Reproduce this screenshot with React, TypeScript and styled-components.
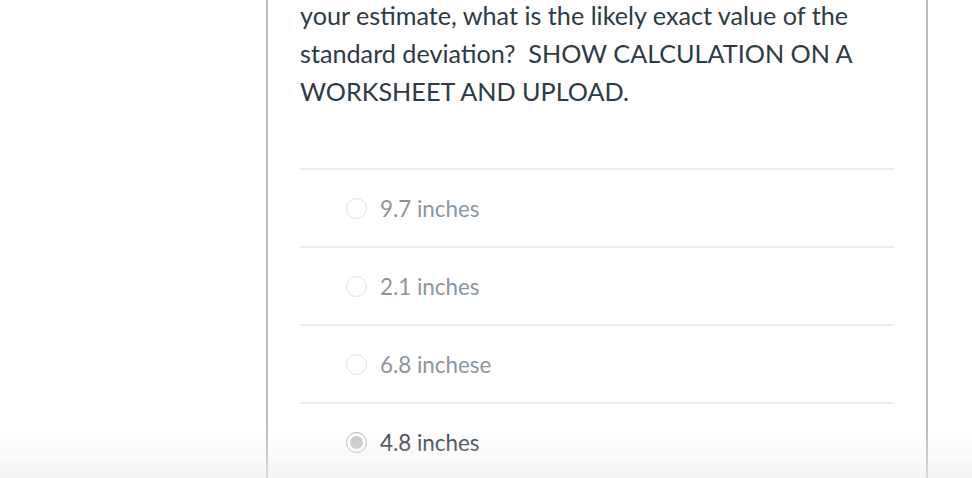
import styled, { createGlobalStyle } from "styled-components"

const GlobalStyle = createGlobalStyle`
  html, body {
    margin: 0;
    padding: 0;
    background: #ffffff;
    height: 100%;
    overflow: hidden;
  }
  body {
    font-family: Lato, "Open Sans", sans-serif;
  }
`

const Page = styled.div`
  display: flex;
  height: 478px;
  padding-left: 266px;
`

const Card = styled.div`
  width: 594px;
  border-left: 2px solid #bcbcbc;
  border-right: 2px solid #bcbcbc;
  padding: 0 32px;
  box-sizing: content-box;
`

const Question = styled.p`
  margin: -4px 0 0;
  font-size: 25.2px;
  line-height: 38px;
  color: #2d3b45;
  padding-bottom: 58px;
  border-bottom: 2px solid #ececec;
`

const Answers = styled.div`
  display: flex;
  flex-direction: column;
`

const Answer = styled.label<{ $last?: boolean }>`
  display: flex;
  align-items: center;
  height: 76px;
  padding-left: 46px;
  gap: 13px;
  border-bottom: 2px solid ${({ $last }) => ($last ? "transparent" : "#ececec")};
`

const Radio = styled.span<{ $checked?: boolean }>`
  width: 19px;
  height: 19px;
  border-radius: 50%;
  border: 1.5px solid ${({ $checked }) => ($checked ? "#b4b4b4" : "#e2e2e2")};
  display: flex;
  align-items: center;
  justify-content: center;
  flex-shrink: 0;

  &::after {
    content: "";
    width: 13px;
    height: 13px;
    border-radius: 50%;
    background: ${({ $checked }) => ($checked ? "#c6c6c6" : "transparent")};
  }
`

const AnswerText = styled.span<{ $checked?: boolean }>`
  font-size: 22.4px;
  color: ${({ $checked }) => ($checked ? "#2d3b45" : "#8b969e")};
  margin-top: 1px;
`

const Fade = styled.div`
  position: fixed;
  left: 0;
  right: 0;
  bottom: 0;
  height: 50px;
  pointer-events: none;
  background: linear-gradient(to bottom, rgba(240, 240, 240, 0), rgba(238, 238, 238, 0.6));
`

const answers = [
  { text: "9.7 inches" },
  { text: "2.1 inches" },
  { text: "6.8 inchese" },
  { text: "4.8 inches", checked: true },
]

const App = () => (
  <>
    <GlobalStyle />
    <Page>
      <Card>
        <Question>
          your estimate, what is the likely exact value of the standard deviation?&nbsp; SHOW
          CALCULATION ON A WORKSHEET AND UPLOAD.
        </Question>
        <Answers>
          {answers.map(({ text, checked }, i) => (
            <Answer key={text} $last={i === answers.length - 1}>
              <Radio $checked={checked} />
              <AnswerText $checked={checked}>{text}</AnswerText>
            </Answer>
          ))}
        </Answers>
      </Card>
    </Page>
    <Fade />
  </>
)

export default App
